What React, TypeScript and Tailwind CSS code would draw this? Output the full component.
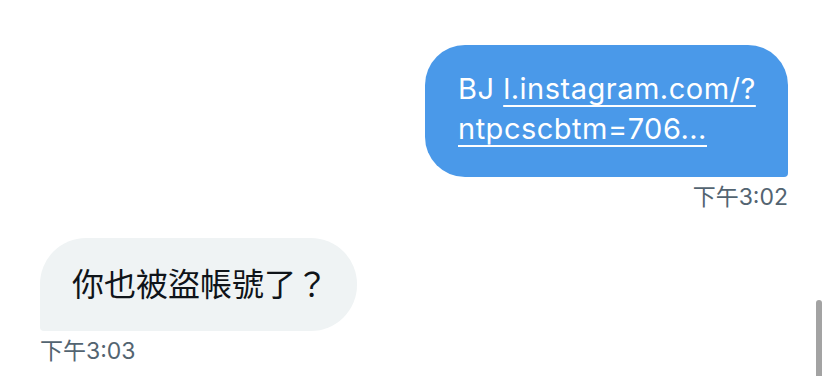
const sans = "font-['Inter','Noto_Sans_CJK_TC',sans-serif]";

const Time = ({ children }: { children: string }) => (
  <p className="mt-[5px] text-[23px] leading-[30px] text-[#536471]">{children}</p>
);

export default function App() {
  return (
    <div className={`relative h-[376px] w-[828px] overflow-hidden bg-white ${sans}`}>
      <div className="flex flex-col px-10 pt-[45px]">
        {/* SENT */}
        <div className="flex flex-col items-end">
          <div className="w-[363px] rounded-[40px] rounded-br-[4px] bg-[#4a99e9] pb-[28px] pl-[33px] pr-6 pt-[24px] text-[29px] leading-[40px] tracking-[0.5px] text-white">
            BJ{" "}
            <a href="#" className="underline decoration-[2px] underline-offset-[6px]">
              l.instagram.com/?
              <br />
              ntpcscbtm=706...
            </a>
          </div>
          <Time>下午3:02</Time>
        </div>

        {/* RECEIVED */}
        <div className="mt-[26px] flex flex-col items-start">
          <div className="rounded-[46px] rounded-bl-[4px] bg-[#eff3f4] py-[26px] pl-[32px] pr-[29px] text-[32px] leading-[41px] text-[#0f1419]">
            你也被盜帳號了？
          </div>
          <Time>下午3:03</Time>
        </div>
      </div>

      {/* scrollbar */}
      <div className="absolute right-[6px] top-[300px] h-[90px] w-[6px] rounded-full bg-[#a3a3a3]" />
    </div>
  );
}
